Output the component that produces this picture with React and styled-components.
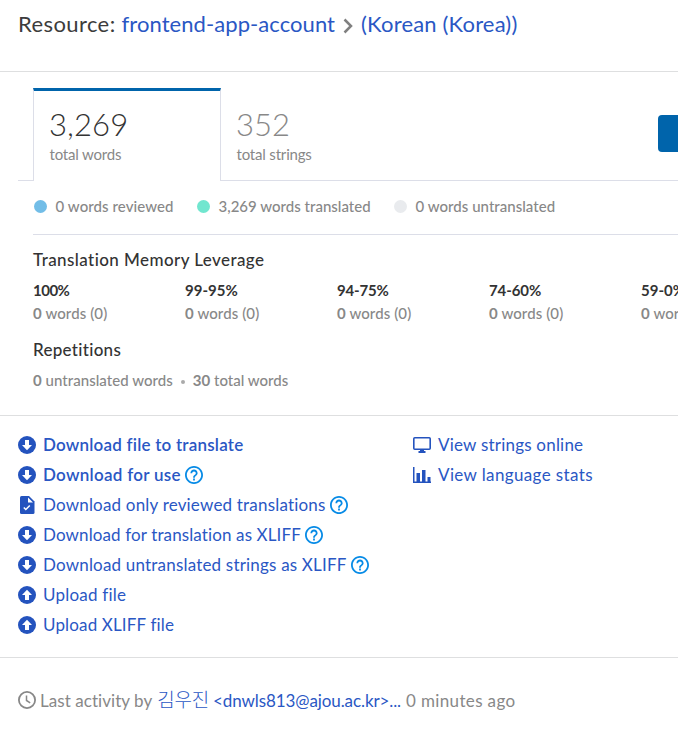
import React from "react";
import styled, { createGlobalStyle } from "styled-components";

const Global = createGlobalStyle`
  * { box-sizing: border-box; }
  body { margin: 0; background: #fff; overflow: hidden; }
`;
const Page = styled.main`
  width: 100%;
  height: 729px;
  overflow: hidden;
  font-family: Lato, "Noto Sans CJK KR", sans-serif;
  font-size: 17px;
  color: #888;
`;
const Text = styled.span`
  white-space: nowrap;
  letter-spacing: ${(p) => p.$track || 0}px;
`;
const Header = styled.header`
  display: flex;
  align-items: flex-start;
  height: 72px;
  padding: 10px 0 0 18px;
  border-bottom: 1px solid #dedfe0;
  font-size: 22px;
  line-height: 28px;
  color: #3c3c3c;
`;
const TitleLink = styled.a`
  color: #2a57c4;
  white-space: nowrap;
  letter-spacing: ${(p) => p.$track}px;
  margin-left: ${(p) => p.$gap}px;
`;
const Chevron = styled.svg`
  width: 10px;
  height: 16px;
  margin: 8px 0 0 8px;
  flex: none;
`;
const Tabs = styled.div`
  display: flex;
  height: 93px;
  margin: 16px 0 0 18px;
`;
const TabLead = styled.div`
  width: 15px;
  flex: none;
  border-bottom: 1px solid #dcdee8;
`;
const Tab = styled.div`
  display: flex;
  flex-direction: column;
  padding: ${(p) => (p.$active ? "16px 0 0 15px" : "19px 0 0 15px")};
  color: ${(p) => (p.$active ? "#333" : "#888")};
  ${(p) =>
    p.$active
      ? "width: 188px; flex: none; border: solid #dcdee8; border-width: 0 1px; border-top: 3px solid #0064ab;"
      : "flex: 1; border-bottom: 1px solid #dcdee8;"}
`;
const Count = styled.div`
  font-size: 31px;
  font-weight: 300;
  line-height: 34px;
  letter-spacing: ${(p) => p.$track}px;
`;
const CountLabel = styled.div`
  margin-top: 3px;
  padding-left: 0.5px;
  font-size: 15px;
  line-height: 20px;
  letter-spacing: -0.18px;
  color: #888;
`;
const ActionArea = styled.div`
  width: 20px;
  flex: none;
  padding-top: 27px;
  border-bottom: 1px solid #dcdee8;
`;
const Action = styled.button`
  display: block;
  width: 20px;
  height: 37px;
  padding: 0;
  border: 0;
  border-radius: 4px 0 0 4px;
  background: #0064ab;
`;
const Details = styled.section`
  margin-left: 33px;
  font-size: 15px;
  font-weight: 500;
`;
const Legend = styled.div`
  display: flex;
  height: 54px;
  padding: 15px 0 0 1px;
  border-bottom: 1px solid #dcdee8;
`;
const LegendItem = styled.div`
  display: flex;
  height: 20px;
  width: ${(p) => p.$width}px;
  line-height: 20px;
`;
const Dot = styled.i`
  width: 13px;
  height: 13px;
  flex: none;
  margin: 4px 8.5px 0 0;
  border-radius: 50%;
  background: ${(p) => p.$color};
`;
const Heading = styled.h3`
  margin: ${(p) => p.$top}px 0 0;
  font-size: 17px;
  line-height: 24px;
  font-weight: 500;
  letter-spacing: ${(p) => p.$track}px;
  color: #333;
`;
const Leverage = styled.div`
  display: grid;
  grid-template-columns: repeat(5, 152px);
  margin-top: 7px;
`;
const Band = styled.div`
  height: 46px;
  white-space: nowrap;
  line-height: 23px;
`;
const Range = styled.div`
  font-weight: 700;
  color: #333;
  letter-spacing: ${(p) => p.$track}px;
`;
const Repetition = styled.div`
  display: flex;
  align-items: center;
  height: 20px;
  margin-top: 8px;
`;
const Separator = styled.i`
  width: 4px;
  height: 4px;
  margin: 4px 8px 0 8px;
  border-radius: 50%;
  background: #aaa;
`;
const Links = styled.section`
  display: grid;
  grid-template-columns: 395px 1fr;
  height: 243px;
  margin-top: 25px;
  padding: 14px 0 0 18px;
  border: solid #dedfe0;
  border-width: 1px 0;
`;
const LinkRow = styled.div`
  display: flex;
  align-items: center;
  height: 30px;
  color: #2a57c4;
  font-weight: ${(p) => (p.$strong ? 600 : 400)};
`;
const LinkText = styled(Text)`
  padding-bottom: 2px;
`;
const Icon = styled.svg`
  width: 18px;
  height: 18px;
  flex: none;
  margin-right: 7px;
`;
const HelpIcon = styled.svg`
  width: 18px;
  height: 18px;
  flex: none;
  margin-left: 4px;
`;
const Activity = styled.footer`
  display: flex;
  align-items: center;
  height: 30px;
  margin: 27px 0 0 18px;
  white-space: pre;
`;
const ClockIcon = styled(Icon)`
  margin: 0 4px 0 0;
`;
const Author = styled.a`
  display: flex;
  align-items: center;
  margin: 0 5px;
  color: #2a57c4;
`;
const KoreanName = styled.span`
  font-family: "Noto Sans CJK KR", sans-serif;
  font-size: 19px;
  font-weight: 300;
  line-height: 24px;
  letter-spacing: -0.2px;
  margin: 0 4px 2px 0;
`;

const Arrow = ({ up }) => (
  <Icon viewBox="0 0 18 18">
    <circle cx="9" cy="9" r="9" fill="#2453be" />
    <path
      d="M7 4h4v5h3l-5 5.2L4 9h3z"
      fill="#fff"
      transform={up ? "rotate(180 9 9)" : undefined}
    />
  </Icon>
);
const Help = () => (
  <HelpIcon viewBox="2 2 20 20">
    <path
      fill="#078be6"
      d="M11 18h2v-2h-2v2zm1-16C6.48 2 2 6.48 2 12s4.48 10 10 10 10-4.48 10-10S17.52 2 12 2zm0 18c-4.41 0-8-3.59-8-8s3.59-8 8-8 8 3.59 8 8-3.59 8-8 8zm0-14c-2.21 0-4 1.79-4 4h2c0-1.1.9-2 2-2s2 .9 2 2c0 2-3 1.75-3 5h2c0-2.25 3-2.5 3-5 0-2.21-1.79-4-4-4z"
    />
  </HelpIcon>
);
const FileCheck = () => (
  <Icon viewBox="0 0 18 18">
    <path d="M3.5 0H11l5.500 5.500v11a1.500 1.500 0 0 1-1.500 1.500H3.500A1.500 1.500 0 0 1 2 16.500v-15A1.500 1.500 0 0 1 3.500 0z" fill="#2453be" />
    <path d="M10 1.500v5h5z" fill="#fff" />
    <path d="M5.800 11.500l2 2 4-4" fill="none" stroke="#fff" strokeWidth="1.500" />
  </Icon>
);
const Monitor = () => (
  <Icon viewBox="0 0 18 18">
    <rect x=".8" y="1.800" width="16.400" height="11.400" rx="1" fill="none" stroke="#2453be" strokeWidth="1.600" />
    <path d="M7 13h4v2h1.500v2h-7v-2H7z" fill="#2453be" />
  </Icon>
);
const Bars = () => (
  <Icon viewBox="0 0 18 18">
    <path d="M0 1h1.500v14.500H18V17H0zM3.500 7h3.500v9H3.500zM9 4h3.500v12H9zM14.500 11h3v5h-3z" fill="#2453be" />
  </Icon>
);

const bands = [
  ["100%", -0.5],
  ["99-95%", 0],
  ["94-75%", -0.2],
  ["74-60%", -0.1],
  ["59-0%", 0],
];
const fileLinks = [
  { label: "Download file to translate", icon: <Arrow />, strong: true, track: 0.21 },
  { label: "Download for use", icon: <Arrow />, strong: true, help: true, track: 0.28 },
  { label: "Download only reviewed translations", icon: <FileCheck />, help: true, track: 0.19 },
  { label: "Download for translation as XLIFF", icon: <Arrow />, help: true, track: 0.12 },
  { label: "Download untranslated strings as XLIFF", icon: <Arrow />, help: true, track: 0.19 },
  { label: "Upload file", icon: <Arrow up />, track: 0.22 },
  { label: "Upload XLIFF file", icon: <Arrow up />, track: 0.15 },
];
const viewLinks = [
  { label: "View strings online", icon: <Monitor />, track: 0.21 },
  { label: "View language stats", icon: <Bars />, track: 0.37 },
];

const LinkList = ({ items }) => (
  <div>
    {items.map((l) => (
      <LinkRow key={l.label} $strong={l.strong}>
        {l.icon}
        <LinkText $track={l.track}>{l.label}</LinkText>
        {l.help && <Help />}
      </LinkRow>
    ))}
  </div>
);

export default function App() {
  return (
    <Page>
      <Global />
      <Header>
        <Text $track={0.4}>Resource:</Text>
        <TitleLink $track={0.07} $gap={6}>frontend-app-account</TitleLink>
        <Chevron viewBox="0 0 10 16">
          <path d="M1.500 1.500L8 8l-6.500 6.500" fill="none" stroke="#808080" strokeWidth="2.500" />
        </Chevron>
        <TitleLink $track={0.17} $gap={8}>(Korean (Korea))</TitleLink>
      </Header>
      <Tabs>
        <TabLead />
        <Tab $active>
          <Count $track={0.1}>3,269</Count>
          <CountLabel>total words</CountLabel>
        </Tab>
        <Tab>
          <Count $track={0}>352</Count>
          <CountLabel>total strings</CountLabel>
        </Tab>
        <ActionArea>
          <Action aria-label="Open" />
        </ActionArea>
      </Tabs>
      <Details>
        <Legend>
          <LegendItem $width={163}>
            <Dot $color="#72bde7" />
            <Text $track={0.08}>0 words reviewed</Text>
          </LegendItem>
          <LegendItem $width={197}>
            <Dot $color="#71e6cf" />
            <Text $track={0.01}>3,269 words translated</Text>
          </LegendItem>
          <LegendItem $width={200}>
            <Dot $color="#e9ebee" />
            <Text $track={0.03}>0 words untranslated</Text>
          </LegendItem>
        </Legend>
        <Heading $top={13} $track={0.42}>Translation Memory Leverage</Heading>
        <Leverage>
          {bands.map(([range, track]) => (
            <Band key={range}>
              <Range $track={track}>{range}</Range>
              <Text $track={0.1}><b>0</b> words (0)</Text>
            </Band>
          ))}
        </Leverage>
        <Heading $top={13} $track={0.3}>Repetitions</Heading>
        <Repetition>
          <Text $track={0.04}><b>0</b> untranslated words</Text>
          <Separator />
          <Text><b>30</b> total words</Text>
        </Repetition>
      </Details>
      <Links>
        <LinkList items={fileLinks} />
        <LinkList items={viewLinks} />
      </Links>
      <Activity>
        <ClockIcon viewBox="0 0 18 18">
          <circle cx="9" cy="9" r="8.100" fill="none" stroke="#888" strokeWidth="1.800" />
          <path d="M8.500 4.500v5l3.700 2.300" fill="none" stroke="#888" strokeWidth="1.500" />
        </ClockIcon>
        <Text $track={0.05}>Last activity by</Text>
        <Author>
          <KoreanName>김우진</KoreanName>
          <Text $track={-0.1}>&lt;dnwls813@ajou.ac.kr&gt;...</Text>
        </Author>
        <Text $track={0.36}>0 minutes ago</Text>
      </Activity>
    </Page>
  );
}
